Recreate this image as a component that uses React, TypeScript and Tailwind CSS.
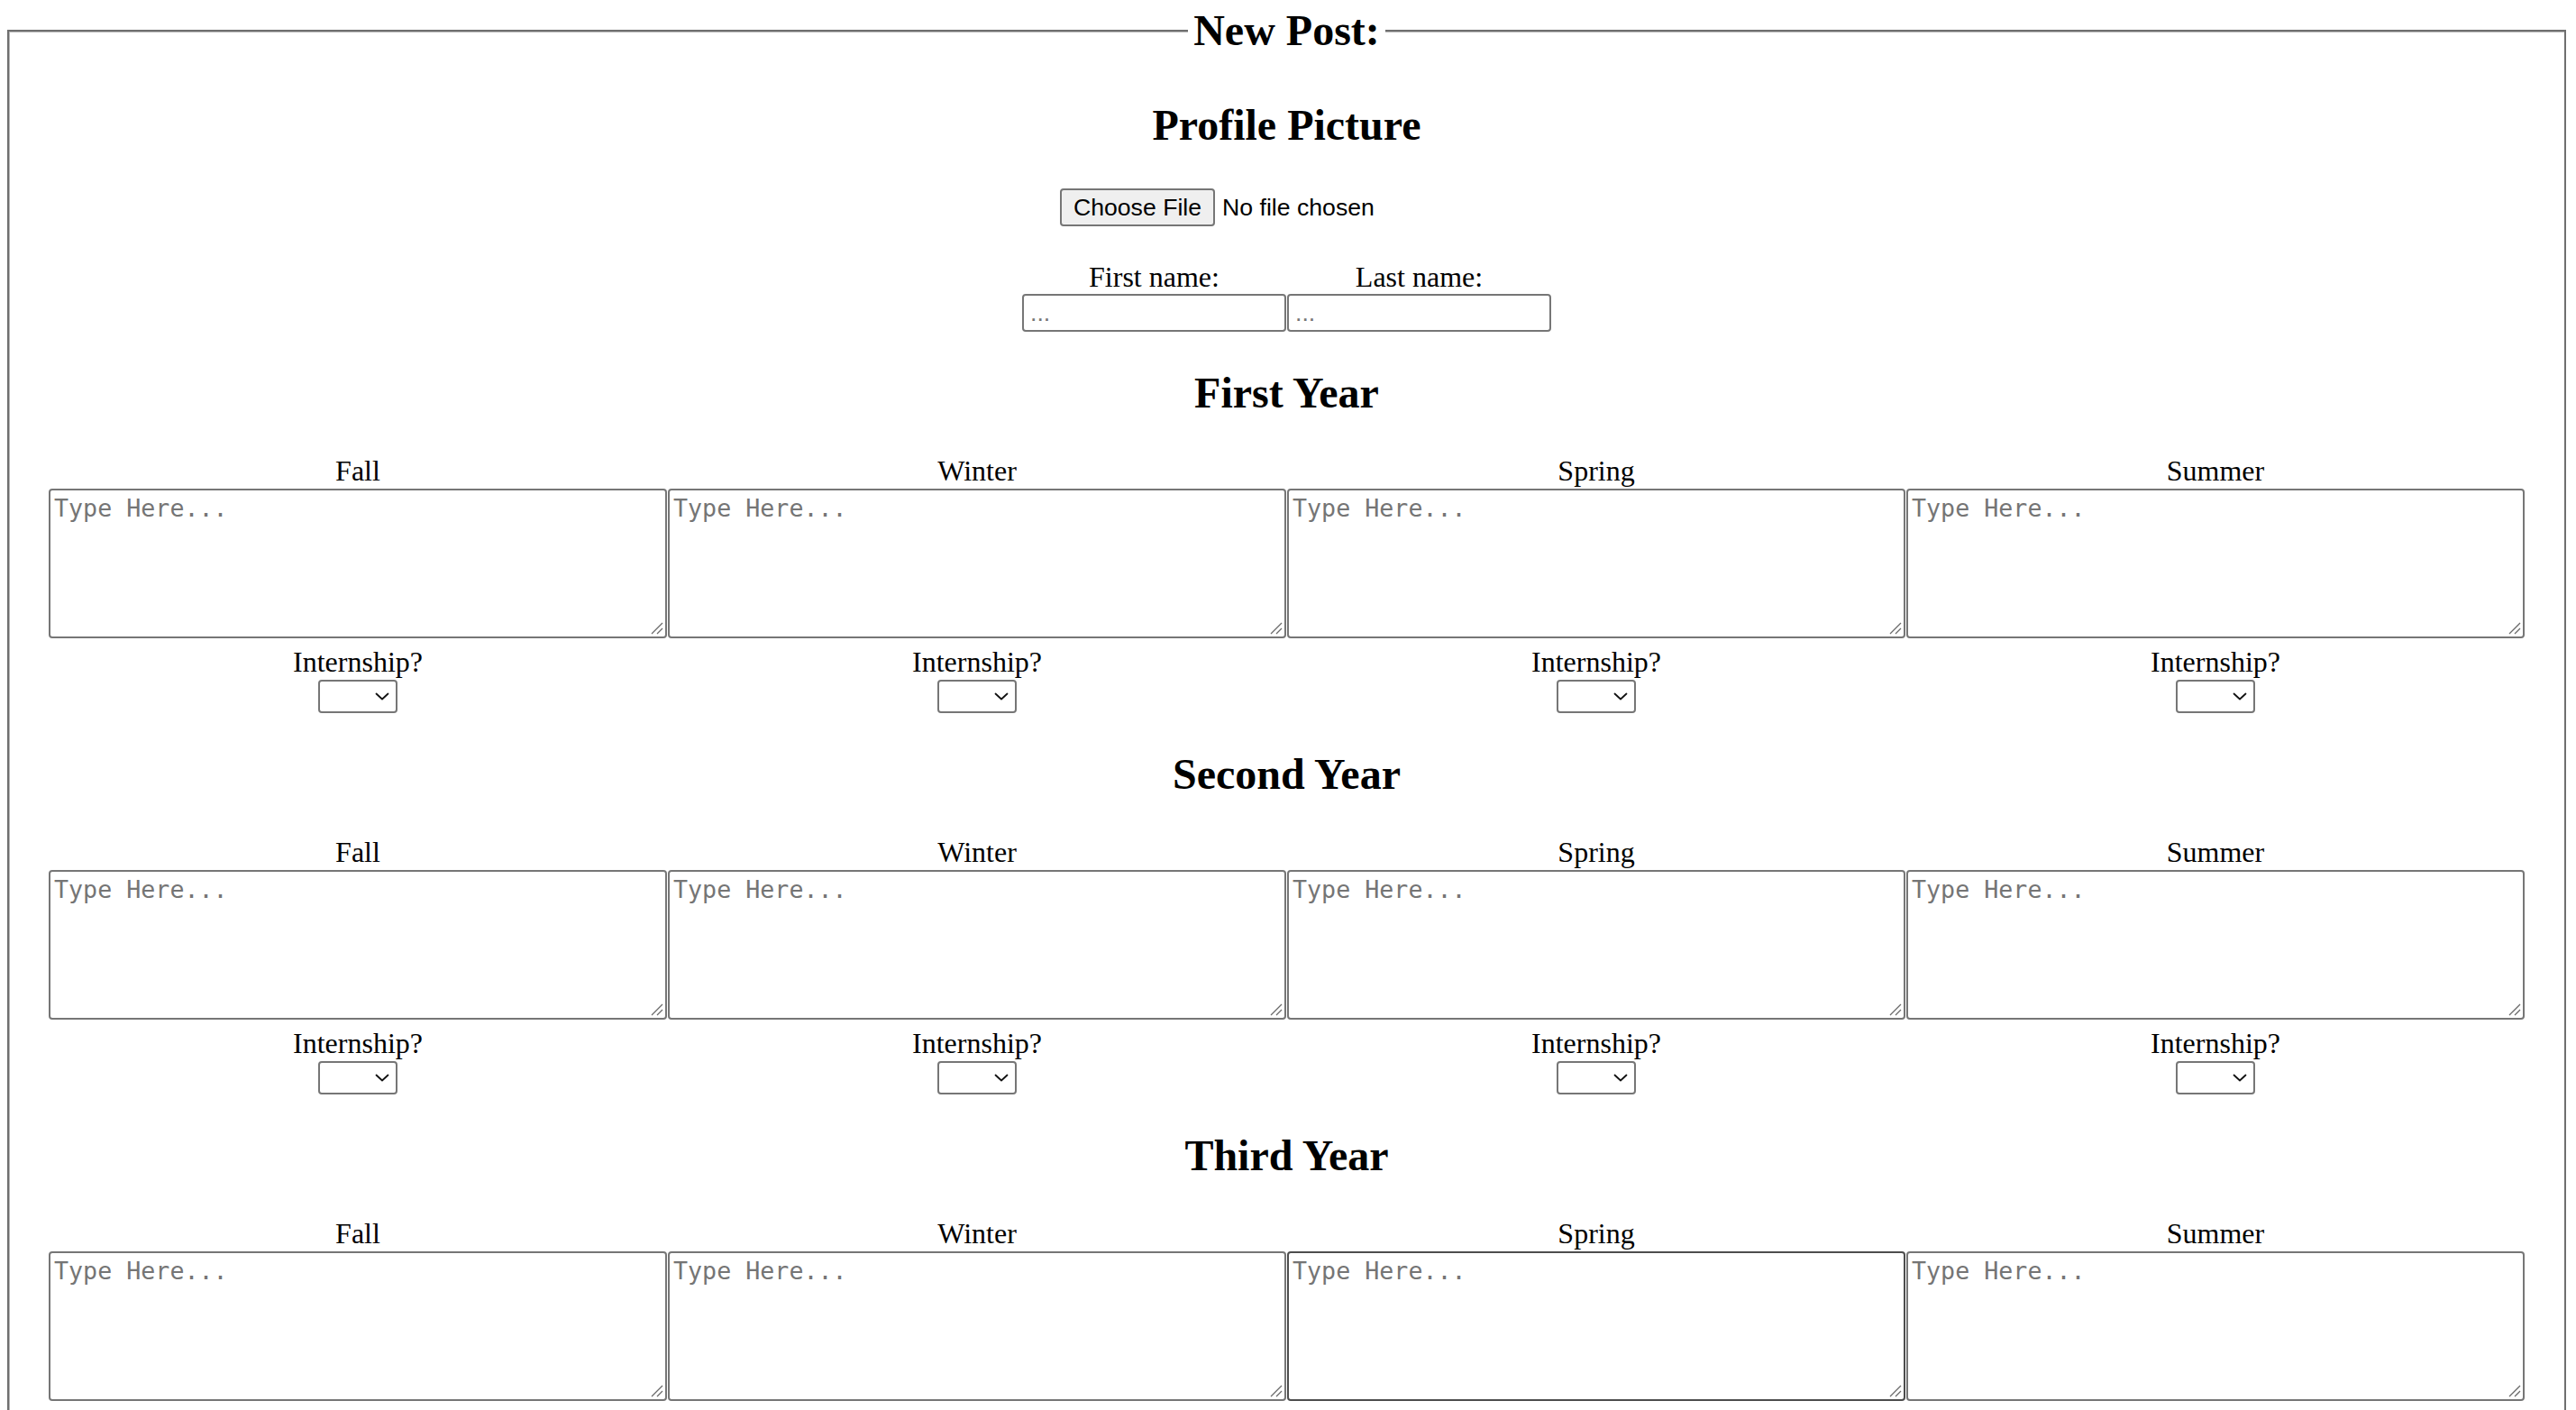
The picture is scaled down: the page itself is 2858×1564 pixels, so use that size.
import React from "react";

const seasons = ["Fall", "Winter", "Spring", "Summer"];

function Chevron() {
  return (
    <svg
      width="16"
      height="9"
      viewBox="0 0 16 9"
      fill="none"
      className="pointer-events-none absolute right-[9px] top-[14px]"
    >
      <path
        d="M1.5 1.5 L8 7.5 L14.5 1.5"
        stroke="#111"
        strokeWidth="1.8"
        strokeLinecap="round"
        strokeLinejoin="round"
      />
    </svg>
  );
}

function Grip() {
  return (
    <svg
      width="14"
      height="14"
      viewBox="0 0 14 14"
      fill="none"
      className="pointer-events-none absolute bottom-[4px] right-[4px]"
    >
      <path d="M1 13 L13 1" stroke="#6a6a6a" strokeWidth="1.3" />
      <path d="M7 13 L13 7" stroke="#6a6a6a" strokeWidth="1.3" />
    </svg>
  );
}

function YearBlock({ title, hot }: { title: string; hot?: number }) {
  return (
    <section className="flex flex-col items-center">
      <h2 className="text-[48px] font-bold leading-[55px]">{title}</h2>
      <div className="mt-[41px] flex justify-center gap-[1px]">
        {seasons.map((s, i) => (
          <div key={s} className="flex w-[686px] flex-col items-center">
            <label className="text-[32px] leading-[37px]">{s}</label>
            <div className="relative mt-[1px]">
              <textarea
                placeholder="Type Here..."
                className={
                  i === hot
                    ? "block h-[166px] w-[686px] resize-none rounded-[4px] border-2 border-[#4d4d4d] bg-white px-[4px] py-[4px] font-['DejaVu_Sans_Mono',monospace] text-[26.67px] leading-[31px] placeholder:text-[#757575]"
                    : "block h-[166px] w-[686px] resize-none rounded-[4px] border-2 border-[#767676] bg-white px-[4px] py-[4px] font-['DejaVu_Sans_Mono',monospace] text-[26.67px] leading-[31px] placeholder:text-[#757575]"
                }
              />
              <Grip />
            </div>
            <label className="mt-[8px] text-[32px] leading-[37px]">Internship?</label>
            <div className="relative mt-[1px]">
              <select className="block h-[37px] w-[88px] appearance-none rounded-[4px] border-2 border-[#767676] bg-white">
                <option value=""></option>
                <option value="yes">Yes</option>
                <option value="no">No</option>
              </select>
              <Chevron />
            </div>
          </div>
        ))}
      </div>
    </section>
  );
}

export default function App() {
  return (
    <div className="h-[1564px] overflow-hidden bg-white font-['Liberation_Serif',serif] text-black">
      <fieldset className="ml-[8px] mr-[11px] mt-[6px] border-2 border-[#6f6f6f] pb-[40px] shadow-[inset_1px_1px_0_#b5b5b5]">
        <legend className="mx-auto bg-white px-[6px] text-[48px] font-bold leading-[55px]">New Post:</legend>

        <h2 className="mt-[50px] text-center text-[48px] font-bold leading-[55px]">Profile Picture</h2>

        <div className="mt-[43px] flex justify-center">
          <div className="flex w-[503px] items-center font-['Liberation_Sans',Arial,sans-serif] text-[26.67px]">
            <button
              type="button"
              className="h-[42px] w-[172px] rounded-[4px] border-2 border-[#767676] bg-[#efefef] leading-[30px] text-black"
            >
              Choose File
            </button>
            <span className="ml-[8px] leading-[30px]">No file chosen</span>
          </div>
        </div>

        <div className="mt-[38px] flex justify-center gap-[1px]">
          <div className="flex w-[293px] flex-col items-center">
            <label className="text-[32px] leading-[37px]">First name:</label>
            <input
              type="text"
              placeholder="..."
              className="block h-[42px] w-[293px] rounded-[4px] border-2 border-[#767676] bg-white px-[7px] font-['Liberation_Sans',Arial,sans-serif] text-[26.67px] placeholder:text-[#757575]"
            />
          </div>
          <div className="flex w-[293px] flex-col items-center">
            <label className="text-[32px] leading-[37px]">Last name:</label>
            <input
              type="text"
              placeholder="..."
              className="block h-[42px] w-[293px] rounded-[4px] border-2 border-[#767676] bg-white px-[7px] font-['Liberation_Sans',Arial,sans-serif] text-[26.67px] placeholder:text-[#757575]"
            />
          </div>
        </div>

        <div className="mt-[40px] flex flex-col gap-[40px]">
          <YearBlock title="First Year" />
          <YearBlock title="Second Year" />
          <YearBlock title="Third Year" hot={2} />
          <YearBlock title="Fourth Year" />
        </div>
      </fieldset>
    </div>
  );
}
